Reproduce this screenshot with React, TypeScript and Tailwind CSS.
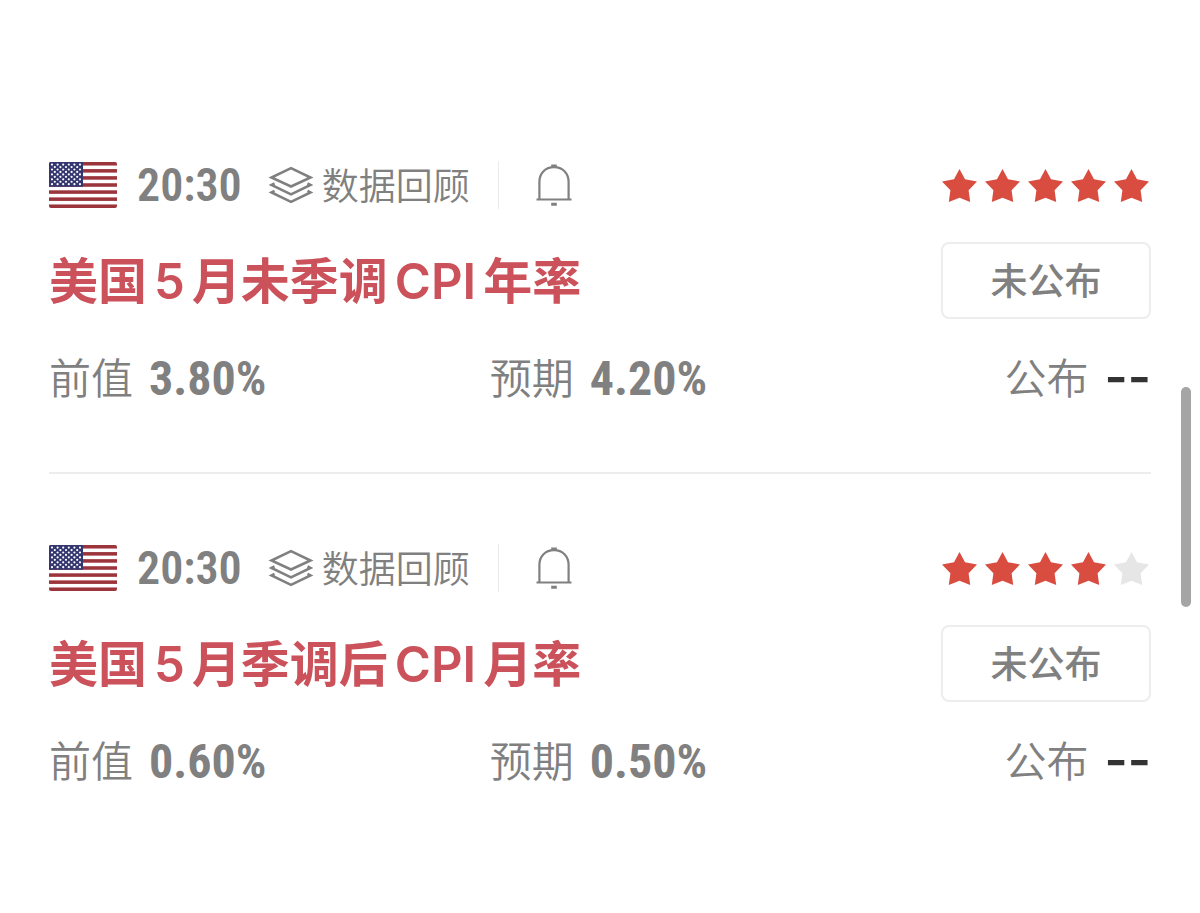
interface Indicator {
  id: string;
  time: string;
  title: string[];
  stars: number;
  previous: string;
  forecast: string;
}

const indicators: Indicator[] = [
  { id: 'cpi-yoy', time: '20:30', title: ['美国', '5', '月未季调', 'CPI', '年率'], stars: 5, previous: '3.80%', forecast: '4.20%' },
  { id: 'cpi-mom', time: '20:30', title: ['美国', '5', '月季调后', 'CPI', '月率'], stars: 4, previous: '0.60%', forecast: '0.50%' },
];

const numeric = "font-['Liberation_Sans_Narrow','Roboto_Condensed','Roboto',sans-serif]";

function UsFlag() {
  const stripe = 46 / 13;
  return (
    <svg viewBox="0 0 68 46" className="h-[46px] w-[68px] shrink-0 rounded-xs" role="img" aria-label="美国">
      <rect width="68" height="46" fill="#fff" />
      {[0, 2, 4, 6, 8, 10, 12].map((i) => (
        <rect key={i} y={i * stripe} width="68" height={stripe} fill="#9b343b" />
      ))}
      <rect width="34" height={stripe * 7} fill="#34366f" />
      {Array.from({ length: 9 }, (_, row) =>
        Array.from({ length: row % 2 ? 5 : 6 }, (_, col) => (
          <circle key={`${row}-${col}`} cx={(row % 2 ? 5.8 : 3) + col * 5.6} cy={2.6 + row * 2.45} r="1.1" fill="#fff" />
        )),
      )}
    </svg>
  );
}

function LayersIcon() {
  return (
    <svg viewBox="0 0 46 38" className="h-[38px] w-[46px] shrink-0" fill="none" stroke="#808080" strokeWidth="2.6" aria-hidden="true">
      <path d="M23 2.2 42.5 11.5 23 20.5 3.5 11.5Z" />
      <path d="M6.5 17.4 3.5 19 23 28.3 42.5 19 39.5 17.4" />
      <path d="M6.5 24.9 3.5 26.5 23 35.8 42.5 26.5 39.5 24.9" />
    </svg>
  );
}

function BellIcon() {
  return (
    <svg viewBox="0 0 36 42" className="h-[42px] w-9" fill="none" stroke="#808080" strokeWidth="2.2" aria-hidden="true">
      <path d="M3.4 35V18C3.4 9 9.5 3.2 18 3.2S32.6 9 32.6 18V35" />
      <path d="M0.5 35.5H35.5" />
      <path d="M15.2 2H20.8M15.2 40.3H20.8" strokeWidth="3" />
    </svg>
  );
}

function Stars({ count }: { count: number }) {
  return (
    <div className="flex gap-2 pr-0.5" role="img" aria-label={`重要性 ${count}`}>
      {[1, 2, 3, 4, 5].map((n) => (
        <svg key={n} viewBox="0 0 35 33" className="h-[33px] w-[35px]" fill={n <= count ? '#d94d40' : '#e6e6e6'} aria-hidden="true">
          <path d="M17.5 0 23 10.3 35 12.4 26.6 21.2 28.2 33 17.5 28.8 6.8 33 8.4 21.2 0 12.4 12 10.3Z" />
        </svg>
      ))}
    </div>
  );
}

function IndicatorCard({ item }: { item: Indicator }) {
  return (
    <article className="text-[#808080]">
      <div className="flex h-12 items-center justify-between">
        <div className="flex items-center">
          <UsFlag />
          <time className={`ml-5 text-[46px] leading-12 font-semibold ${numeric}`}>{item.time}</time>
          <a href="#review" className="ml-[26px] flex items-center gap-2 text-[37px] leading-12 font-[350]">
            <LayersIcon />
            <span className="pt-1">数据回顾</span>
          </a>
          <div className="ml-7 h-12 w-px bg-[#ebebeb]" />
          <button type="button" aria-label="提醒" className="ml-[37px]">
            <BellIcon />
          </button>
        </div>
        <Stars count={item.stars} />
      </div>
      <div className="mt-8 flex h-[78px] items-center justify-between">
        <h2 className="flex gap-[7px] pt-1 text-[49px] leading-[78px] font-semibold text-[#cb515a]">
          {item.title.map((part) => (
            <span key={part}>{part}</span>
          ))}
        </h2>
        <button type="button" className="h-[77px] w-[210px] rounded-lg border-2 border-[#ededed] pt-1 text-[37px] font-medium">
          未公布
        </button>
      </div>
      <dl className="mt-8 grid grid-cols-[2fr_2fr_1fr] text-[42px] leading-14">
        <div className="flex gap-4">
          <dt className="font-[350]">前值</dt>
          <dd className={`text-[48px] font-bold ${numeric}`}>{item.previous}</dd>
        </div>
        <div className="flex gap-4">
          <dt className="font-[350]">预期</dt>
          <dd className={`text-[48px] font-bold ${numeric}`}>{item.forecast}</dd>
        </div>
        <div className="flex justify-end gap-4">
          <dt className="font-[350]">公布</dt>
          <dd className="-mt-0.5 text-[50px] font-semibold text-[#333]">--</dd>
        </div>
      </dl>
    </article>
  );
}

export default function App() {
  return (
    <main className="relative min-h-screen bg-white px-[49px] pt-[161px] pb-20 font-['Inter','Noto_Sans_CJK_SC',sans-serif]">
      <IndicatorCard item={indicators[0]} />
      <hr className="mt-[65px] mb-[70px] border-t-2 border-[#ededed]" />
      <IndicatorCard item={indicators[1]} />
      <div className="absolute top-[387px] right-[9px] h-[220px] w-[10px] rounded-full bg-[#a5a5a5]" />
    </main>
  );
}
